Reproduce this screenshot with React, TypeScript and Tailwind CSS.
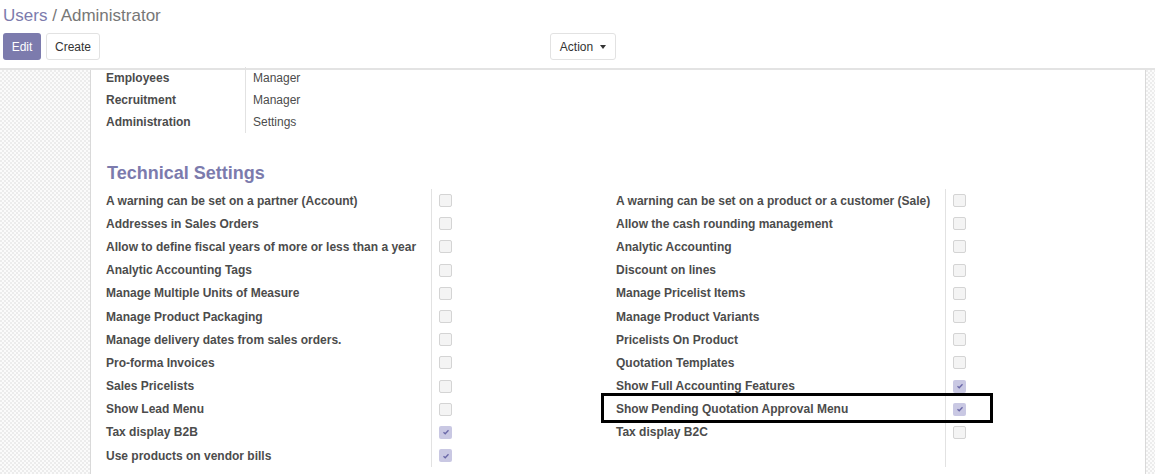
import React from 'react';

type Setting = { label: string; checked?: boolean };

const LEFT: Setting[] = [
  { label: 'A warning can be set on a partner (Account)' },
  { label: 'Addresses in Sales Orders' },
  { label: 'Allow to define fiscal years of more or less than a year' },
  { label: 'Analytic Accounting Tags' },
  { label: 'Manage Multiple Units of Measure' },
  { label: 'Manage Product Packaging' },
  { label: 'Manage delivery dates from sales orders.' },
  { label: 'Pro-forma Invoices' },
  { label: 'Sales Pricelists' },
  { label: 'Show Lead Menu' },
  { label: 'Tax display B2B', checked: true },
  { label: 'Use products on vendor bills', checked: true },
];

const RIGHT: Setting[] = [
  { label: 'A warning can be set on a product or a customer (Sale)' },
  { label: 'Allow the cash rounding management' },
  { label: 'Analytic Accounting' },
  { label: 'Discount on lines' },
  { label: 'Manage Pricelist Items' },
  { label: 'Manage Product Variants' },
  { label: 'Pricelists On Product' },
  { label: 'Quotation Templates' },
  { label: 'Show Full Accounting Features', checked: true },
  { label: 'Show Pending Quotation Approval Menu', checked: true },
  { label: 'Tax display B2C' },
];

const ACCESS = [
  { label: 'Employees', value: 'Manager' },
  { label: 'Recruitment', value: 'Manager' },
  { label: 'Administration', value: 'Settings' },
];

const Checkbox: React.FC<{ checked?: boolean }> = ({ checked }) =>
  checked ? (
    <span className="w-[13px] h-[13px] rounded-[2px] bg-[#c9c8e3] flex items-center justify-center">
      <svg width="8" height="8" viewBox="0 0 8 8">
        <path d="M1.5 4.3 L3.2 5.8 L6.5 2.2" fill="none" stroke="#6a68a8" strokeWidth="1.3" />
      </svg>
    </span>
  ) : (
    <span className="w-[13px] h-[13px] rounded-[2px] border border-[#d4d4d4] bg-[#f4f4f4]" />
  );

const SettingsColumn: React.FC<{ items: Setting[]; labelW: string }> = ({ items, labelW }) => (
  <div className="flex">
    <div className={labelW}>
      {items.map((s, i) => (
        <div key={i} className="h-[23.2px] flex items-center font-bold text-[#4c4c4c] whitespace-nowrap">
          {s.label}
        </div>
      ))}
    </div>
    <div className="border-l border-[#e2e2e2] pl-[7px]">
      {items.map((s, i) => (
        <div key={i} className="h-[23.2px] flex items-center">
          <Checkbox checked={s.checked} />
        </div>
      ))}
    </div>
  </div>
);

const App: React.FC = () => {
  return (
    <div
      className="w-[1155px] h-[474px] overflow-hidden bg-white text-[12px] text-[#4c4c4c] flex flex-col"
      style={{ fontFamily: '"Liberation Sans", Arial, sans-serif' }}
    >
      {/* Control panel */}
      <header className="h-[70px] shrink-0 border-b-2 border-[#e3e3e3] pl-[3px] pt-[4px]">
        <div className="text-[17px] leading-[24px] text-[#777]">
          <span className="text-[#7c7bad]">Users</span> / Administrator
        </div>
        <div className="flex items-center mt-[5px]">
          <div className="flex gap-[5px] w-[547px]">
            <button className="h-[27px] w-[38px] rounded-[3px] bg-[#7c7bad] text-white text-[12px]">Edit</button>
            <button className="h-[27px] w-[54px] rounded-[3px] border border-[#e2e2e2] bg-white text-[#333] text-[12px]">
              Create
            </button>
          </div>
          <button className="h-[27px] w-[66px] rounded-[3px] border border-[#e2e2e2] bg-white text-[#333] text-[12px] flex items-center justify-center gap-[7px]">
            Action
            <span className="w-0 h-0 border-l-[3px] border-r-[3px] border-t-[4px] border-l-transparent border-r-transparent border-t-[#333]" />
          </button>
        </div>
      </header>

      {/* Sheet area */}
      <main className="flex-1 flex bg-[repeating-conic-gradient(#ececec_0_25%,#fbfbfb_0_50%)] bg-[length:4px_4px]">
        <div className="w-[90px] shrink-0" />
        <section className="relative w-[1056px] bg-white border-l border-r border-[#d9d9d9] pl-[15px]">
          <div className="-mt-[3px]">
            {ACCESS.map((r) => (
              <div key={r.label} className="flex h-[22px] items-center">
                <div className="w-[139px] font-bold">{r.label}</div>
                <div className="self-stretch border-l border-[#e2e2e2] pl-[7px] flex items-center">{r.value}</div>
              </div>
            ))}
          </div>

          <h2 className="mt-[28px] text-[18px] leading-[24px] font-bold text-[#7c7bad] pl-[1px]">Technical Settings</h2>

          <div className="mt-[4px] flex">
            <div className="w-[510px]">
              <SettingsColumn items={LEFT} labelW="w-[325px]" />
            </div>
            <SettingsColumn items={RIGHT} labelW="w-[329px]" />
          </div>

          {/* annotation box */}
          <div className="absolute left-[510px] top-[323px] w-[392px] h-[30px] border-[3px] border-black" />
        </section>
      </main>
    </div>
  );
};

export default App;
